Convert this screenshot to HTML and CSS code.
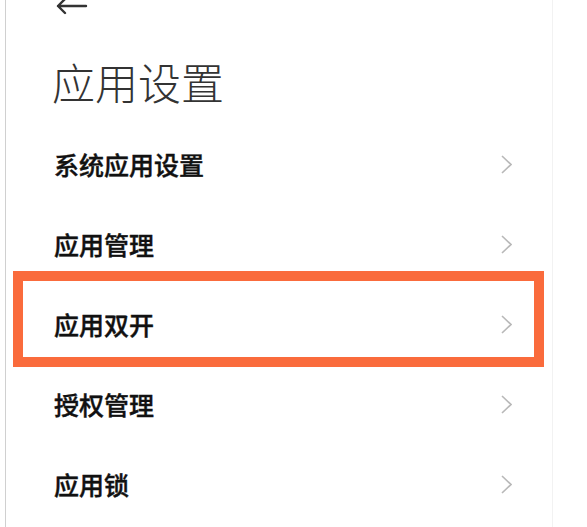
FILE: index.html
```html
<!DOCTYPE html>
<html lang="zh-CN">
<head>
<meta charset="utf-8">
<link rel="stylesheet" href="styles.css">
</head>
<body>
<div class="panel">
  <div class="topbar">
    <svg class="back" width="32" height="16" viewBox="0 0 32 16">
      <path d="M30 7 H2 M9 0 L2 7 L9 14" fill="none" stroke="#333" stroke-width="2.4" stroke-linecap="round" stroke-linejoin="round"/>
    </svg>
  </div>
  <h1 class="title">应用设置</h1>
  <ul class="list">
    <li class="row"><span class="label">系统应用设置</span><svg class="chev" width="11" height="19" viewBox="0 0 11 19"><path d="M1 1 L10 9.5 L1 18" fill="none" stroke="#b8b8b8" stroke-width="1.6"/></svg></li>
    <li class="row"><span class="label">应用管理</span><svg class="chev" width="11" height="19" viewBox="0 0 11 19"><path d="M1 1 L10 9.5 L1 18" fill="none" stroke="#b8b8b8" stroke-width="1.6"/></svg></li>
    <li class="row highlighted"><span class="label">应用双开</span><svg class="chev" width="11" height="19" viewBox="0 0 11 19"><path d="M1 1 L10 9.5 L1 18" fill="none" stroke="#b8b8b8" stroke-width="1.6"/></svg><span class="mark"></span></li>
    <li class="row"><span class="label">授权管理</span><svg class="chev" width="11" height="19" viewBox="0 0 11 19"><path d="M1 1 L10 9.5 L1 18" fill="none" stroke="#b8b8b8" stroke-width="1.6"/></svg></li>
    <li class="row"><span class="label">应用锁</span><svg class="chev" width="11" height="19" viewBox="0 0 11 19"><path d="M1 1 L10 9.5 L1 18" fill="none" stroke="#b8b8b8" stroke-width="1.6"/></svg></li>
  </ul>
</div>
</body>
</html>
```
FILE: styles.css
```css
html, body {
  margin: 0;
  padding: 0;
  background: #ffffff;
}
body {
  width: 587px;
  height: 527px;
  overflow: hidden;
  font-family: "Noto Sans CJK SC", "Noto Sans", sans-serif;
}
.panel {
  margin-left: 5px;
  width: 548px;
  height: 527px;
  border-left: 1px solid #d0d0d0;
  border-right: 1px solid #f2f2f2;
  box-sizing: border-box;
}
.topbar {
  height: 16px;
  padding-left: 50px;
  display: flex;
  align-items: flex-start;
}
.back {
  display: block;
  margin-top: -1px;
}
.title {
  margin: 36px 0 0 0;
  padding-left: 46px;
  font-size: 43px;
  line-height: 58px;
  font-weight: 300;
  color: #333333;
}
.list {
  list-style: none;
  margin: 14px 0 0 0;
  padding: 0;
}
.row {
  position: relative;
  height: 80px;
  display: flex;
  align-items: center;
  justify-content: space-between;
  padding: 0 40px 0 48px;
}
.label {
  font-size: 25px;
  font-weight: 500;
  color: #111111;
  -webkit-text-stroke: 0.4px #111111;
}
.chev {
  display: block;
}
.mark {
  position: absolute;
  left: 7px;
  top: -13px;
  width: 531px;
  height: 96px;
  border: 10px solid #fa6b3c;
  box-sizing: border-box;
  pointer-events: none;
}
```
